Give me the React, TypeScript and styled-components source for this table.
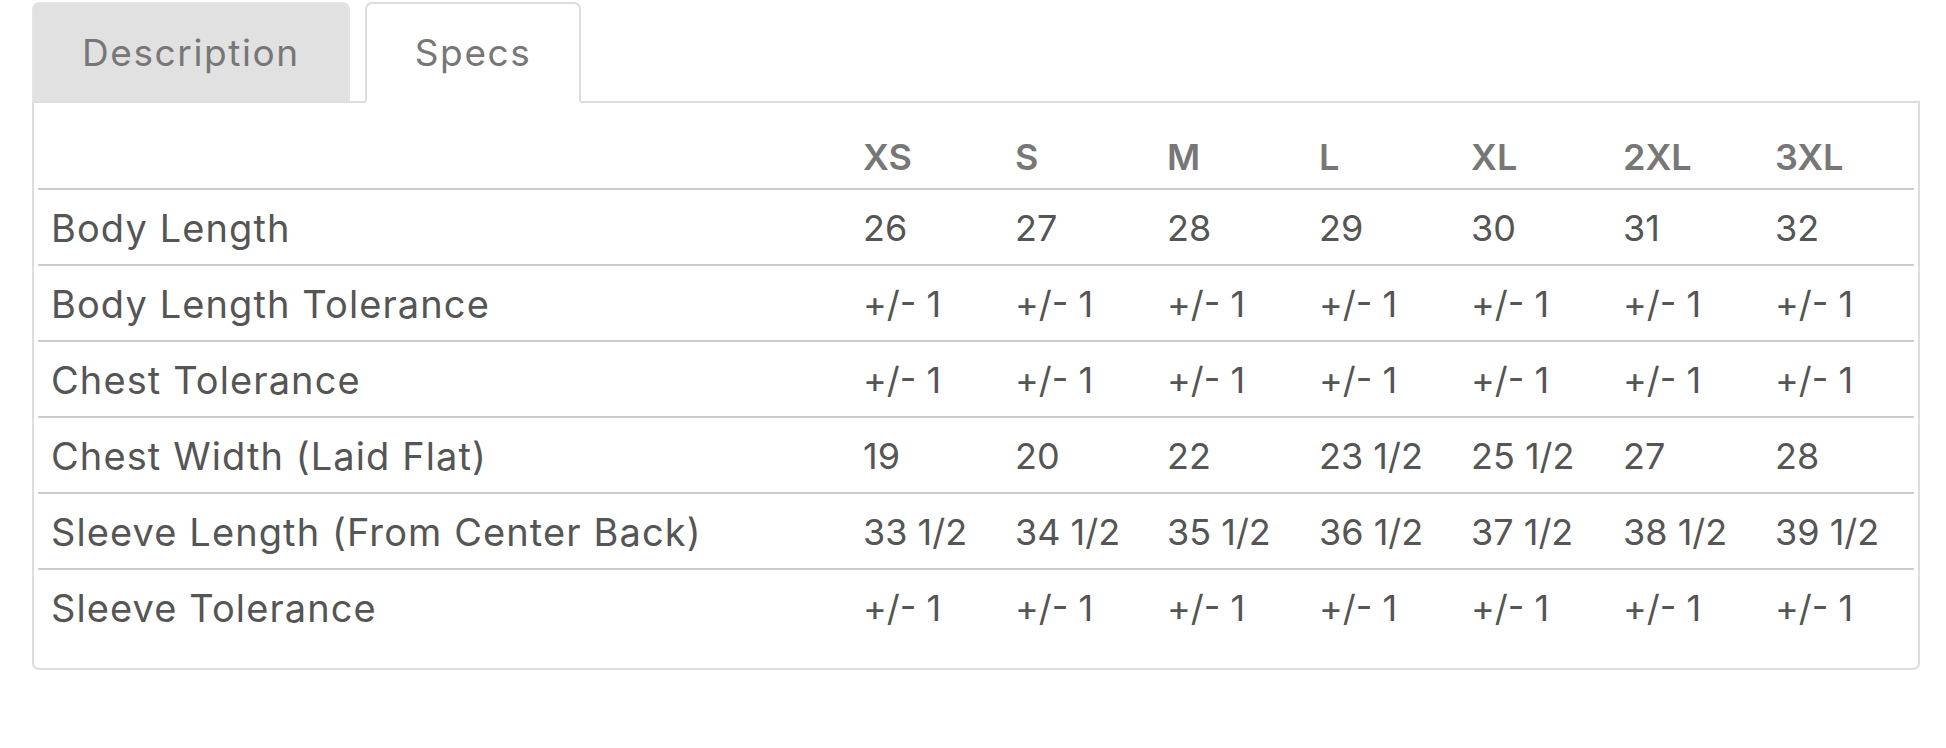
import styled, { createGlobalStyle } from "styled-components";

const GlobalStyle = createGlobalStyle`
  html, body {
    margin: 0;
    padding: 0;
    background: #ffffff;
  }
  body {
    font-family: Inter, "Open Sans", sans-serif;
  }
`;

const Page = styled.div`
  width: 1946px;
  height: 748px;
  padding: 2px 26px 0 32px;
  box-sizing: border-box;
`;

const Tabs = styled.ul`
  display: flex;
  gap: 15px;
  margin: 0;
  padding: 0;
  list-style: none;
  position: relative;
  z-index: 1;
`;

const Tab = styled.li<{ $active?: boolean }>`
  display: flex;
  align-items: center;
  justify-content: center;
  height: 101px;
  box-sizing: border-box;
  padding: 0 48px;
  font-size: 37px;
  letter-spacing: 1.6px;
  color: #777777;
  background: ${(p) => (p.$active ? "#ffffff" : "#e1e1e1")};
  border: 2px solid ${(p) => (p.$active ? "#dddddd" : "#e4e4e4")};
  border-bottom: ${(p) => (p.$active ? "2px solid #ffffff" : "2px solid #dddddd")};
  border-radius: 7px 7px 0 0;
  margin-bottom: -2px;
`;

const Panel = styled.div`
  border: 2px solid #dddddd;
  border-radius: 0 0 7px 7px;
  padding: 0 4px 24px;
`;

const Table = styled.table`
  width: 100%;
  border-collapse: collapse;
  table-layout: fixed;
  color: #555555;
  font-size: 36px;
`;

const LabelCol = styled.col`
  width: 812px;
`;

const HeadCell = styled.th`
  padding: 32px 13px 9px;
  line-height: 44px;
  text-align: left;
  font-weight: 600;
  color: #777777;
  border-bottom: 2px solid #cccccc;
`;

const Row = styled.tr`
  & + & td {
    border-top: 2px solid #cccccc;
  }
`;

const Cell = styled.td<{ $label?: boolean }>`
  padding: 16px 13px 14px;
  line-height: 44px;
  white-space: nowrap;
  font-weight: 400;
  font-size: ${(p) => (p.$label ? "38px" : "36px")};
  letter-spacing: ${(p) => (p.$label ? "1.1px" : "0")};
`;

const sizes = ["XS", "S", "M", "L", "XL", "2XL", "3XL"];

const rows: { label: string; values: string[] }[] = [
  { label: "Body Length", values: ["26", "27", "28", "29", "30", "31", "32"] },
  { label: "Body Length Tolerance", values: Array(7).fill("+/- 1") },
  { label: "Chest Tolerance", values: Array(7).fill("+/- 1") },
  {
    label: "Chest Width (Laid Flat)",
    values: ["19", "20", "22", "23 1/2", "25 1/2", "27", "28"],
  },
  {
    label: "Sleeve Length (From Center Back)",
    values: ["33 1/2", "34 1/2", "35 1/2", "36 1/2", "37 1/2", "38 1/2", "39 1/2"],
  },
  { label: "Sleeve Tolerance", values: Array(7).fill("+/- 1") },
];

function App() {
  return (
    <>
      <GlobalStyle />
      <Page>
        <Tabs>
          <Tab>Description</Tab>
          <Tab $active>Specs</Tab>
        </Tabs>
        <Panel>
          <Table>
            <colgroup>
              <LabelCol />
              {sizes.map((s) => (
                <col key={s} />
              ))}
            </colgroup>
            <thead>
              <tr>
                <HeadCell />
                {sizes.map((s) => (
                  <HeadCell key={s}>{s}</HeadCell>
                ))}
              </tr>
            </thead>
            <tbody>
              {rows.map((row) => (
                <Row key={row.label}>
                  <Cell $label>{row.label}</Cell>
                  {row.values.map((v, i) => (
                    <Cell key={i}>{v}</Cell>
                  ))}
                </Row>
              ))}
            </tbody>
          </Table>
        </Panel>
      </Page>
    </>
  );
}

export default App;
